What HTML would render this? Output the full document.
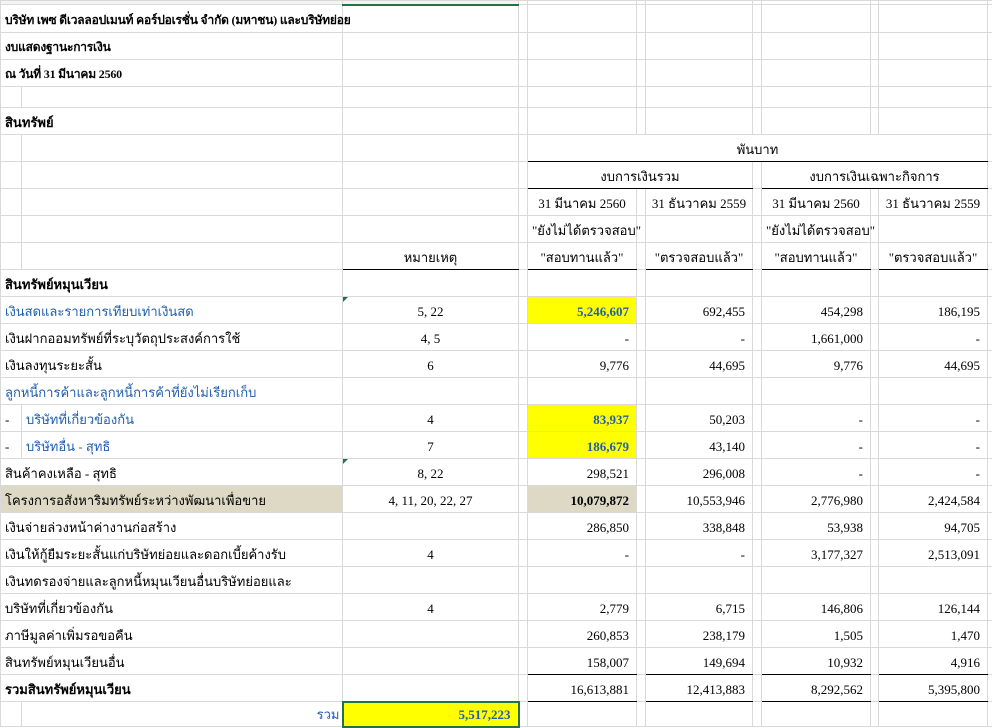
<!DOCTYPE html>
<html><head><meta charset="utf-8">
<style>
html,body{margin:0;padding:0;background:#fff;}
body{width:992px;height:726px;overflow:hidden;position:relative;font-family:"Liberation Serif","Noto Serif CJK SC",serif;font-size:13px;color:#000;}
table{border-collapse:collapse;table-layout:fixed;position:absolute;left:0;top:0;width:992px;}
td{border:1px solid #d9d9d9;padding:0 4px 4px 4px;vertical-align:bottom;white-space:nowrap;overflow:visible;line-height:15px;}
td.l{text-align:left}
td.c{text-align:center}
td.r{text-align:right;padding-right:7px}
.b{font-weight:bold}
.bl{color:#1f5fae}
.y{background:#ffff00}
.t{background:#ddd9c4}
.ub{border-bottom:1.5px solid #000}
.tri{position:relative}
.tri:before{content:"";position:absolute;left:0;top:0;border-top:5px solid #217346;border-right:5px solid transparent;}
.ttl{font-size:12px;letter-spacing:-0.2px}
</style></head><body>
<table>
<colgroup>
<col style="width:21px"><col style="width:321px"><col style="width:176px"><col style="width:9px">
<col style="width:109px"><col style="width:9px"><col style="width:107px"><col style="width:9px">
<col style="width:109px"><col style="width:8px"><col style="width:109px"><col style="width:5px">
</colgroup>
<tr style="height:4px"><td colspan="2" style="padding:0;background:#f3f3f3"></td><td style="padding:0;background:#f3f3f3;border-bottom:2px solid #217346"></td><td style="padding:0"></td><td style="padding:0"></td><td style="padding:0"></td><td style="padding:0"></td><td style="padding:0"></td><td style="padding:0"></td><td style="padding:0"></td><td style="padding:0"></td><td style="padding:0"></td></tr>
<tr style="height:28px"><td colspan="2" class="l b ttl">บริษัท เพซ ดีเวลลอปเมนท์ คอร์ปอเรชั่น จำกัด (มหาชน) และบริษัทย่อย</td><td></td><td></td><td></td><td></td><td></td><td></td><td></td><td></td><td></td><td></td></tr>
<tr style="height:27px"><td colspan="2" class="l b ttl">งบแสดงฐานะการเงิน</td><td></td><td></td><td></td><td></td><td></td><td></td><td></td><td></td><td></td><td></td></tr>
<tr style="height:27px"><td colspan="2" class="l b ttl">ณ วันที่ 31 มีนาคม 2560</td><td></td><td></td><td></td><td></td><td></td><td></td><td></td><td></td><td></td><td></td></tr>
<tr style="height:21px"><td></td><td></td><td></td><td></td><td></td><td></td><td></td><td></td><td></td><td></td><td></td><td></td></tr>
<tr style="height:27px"><td colspan="2" class="l b">สินทรัพย์</td><td></td><td></td><td></td><td></td><td></td><td></td><td></td><td></td><td></td><td></td></tr>
<tr style="height:27px"><td></td><td></td><td></td><td></td><td colspan="7" class="c ub">พันบาท</td><td></td></tr>
<tr style="height:27px"><td></td><td></td><td></td><td></td><td colspan="3" class="c ub">งบการเงินรวม</td><td></td><td colspan="3" class="c ub">งบการเงินเฉพาะกิจการ</td><td></td></tr>
<tr style="height:27px"><td></td><td></td><td></td><td></td><td class="c">31 มีนาคม 2560</td><td></td><td class="c">31 ธันวาคม 2559</td><td></td><td class="c">31 มีนาคม 2560</td><td></td><td class="c">31 ธันวาคม 2559</td><td></td></tr>
<tr style="height:27px"><td></td><td></td><td></td><td></td><td class="c">"ยังไม่ได้ตรวจสอบ"</td><td></td><td></td><td></td><td class="c">"ยังไม่ได้ตรวจสอบ"</td><td></td><td></td><td></td></tr>
<tr style="height:27px"><td></td><td></td><td class="c ub">หมายเหตุ</td><td></td><td class="c ub">"สอบทานแล้ว"</td><td></td><td class="c ub">"ตรวจสอบแล้ว"</td><td></td><td class="c ub">"สอบทานแล้ว"</td><td></td><td class="c ub">"ตรวจสอบแล้ว"</td><td></td></tr>
<tr style="height:27px"><td colspan="2" class="l b">สินทรัพย์หมุนเวียน</td><td></td><td></td><td></td><td></td><td></td><td></td><td></td><td></td><td></td><td></td></tr>
<tr style="height:27px"><td colspan="2" class="l bl">เงินสดและรายการเทียบเท่าเงินสด</td><td class="c tri">5, 22</td><td></td><td class="r y b bl">5,246,607</td><td></td><td class="r">692,455</td><td></td><td class="r">454,298</td><td></td><td class="r">186,195</td><td></td></tr>
<tr style="height:27px"><td colspan="2" class="l">เงินฝากออมทรัพย์ที่ระบุวัตถุประสงค์การใช้</td><td class="c">4, 5</td><td></td><td class="r">-</td><td></td><td class="r">-</td><td></td><td class="r">1,661,000</td><td></td><td class="r">-</td><td></td></tr>
<tr style="height:27px"><td colspan="2" class="l">เงินลงทุนระยะสั้น</td><td class="c">6</td><td></td><td class="r">9,776</td><td></td><td class="r">44,695</td><td></td><td class="r">9,776</td><td></td><td class="r">44,695</td><td></td></tr>
<tr style="height:27px"><td colspan="2" class="l bl">ลูกหนี้การค้าและลูกหนี้การค้าที่ยังไม่เรียกเก็บ</td><td></td><td></td><td></td><td></td><td></td><td></td><td></td><td></td><td></td><td></td></tr>
<tr style="height:27px"><td class="l">-</td><td class="l bl">บริษัทที่เกี่ยวข้องกัน</td><td class="c">4</td><td></td><td class="r y b bl">83,937</td><td></td><td class="r">50,203</td><td></td><td class="r">-</td><td></td><td class="r">-</td><td></td></tr>
<tr style="height:27px"><td class="l">-</td><td class="l bl">บริษัทอื่น - สุทธิ</td><td class="c">7</td><td></td><td class="r y b bl">186,679</td><td></td><td class="r">43,140</td><td></td><td class="r">-</td><td></td><td class="r">-</td><td></td></tr>
<tr style="height:27px"><td colspan="2" class="l">สินค้าคงเหลือ - สุทธิ</td><td class="c tri">8, 22</td><td></td><td class="r">298,521</td><td></td><td class="r">296,008</td><td></td><td class="r">-</td><td></td><td class="r">-</td><td></td></tr>
<tr style="height:27px"><td colspan="2" class="l t">โครงการอสังหาริมทรัพย์ระหว่างพัฒนาเพื่อขาย</td><td class="c">4, 11, 20, 22, 27</td><td></td><td class="r t b">10,079,872</td><td></td><td class="r">10,553,946</td><td></td><td class="r">2,776,980</td><td></td><td class="r">2,424,584</td><td></td></tr>
<tr style="height:27px"><td colspan="2" class="l">เงินจ่ายล่วงหน้าค่างานก่อสร้าง</td><td></td><td></td><td class="r">286,850</td><td></td><td class="r">338,848</td><td></td><td class="r">53,938</td><td></td><td class="r">94,705</td><td></td></tr>
<tr style="height:27px"><td colspan="2" class="l">เงินให้กู้ยืมระยะสั้นแก่บริษัทย่อยและดอกเบี้ยค้างรับ</td><td class="c">4</td><td></td><td class="r">-</td><td></td><td class="r">-</td><td></td><td class="r">3,177,327</td><td></td><td class="r">2,513,091</td><td></td></tr>
<tr style="height:27px"><td colspan="2" class="l">เงินทดรองจ่ายและลูกหนี้หมุนเวียนอื่นบริษัทย่อยและ</td><td></td><td></td><td></td><td></td><td></td><td></td><td></td><td></td><td></td><td></td></tr>
<tr style="height:27px"><td colspan="2" class="l">บริษัทที่เกี่ยวข้องกัน</td><td class="c">4</td><td></td><td class="r">2,779</td><td></td><td class="r">6,715</td><td></td><td class="r">146,806</td><td></td><td class="r">126,144</td><td></td></tr>
<tr style="height:27px"><td colspan="2" class="l">ภาษีมูลค่าเพิ่มรอขอคืน</td><td></td><td></td><td class="r">260,853</td><td></td><td class="r">238,179</td><td></td><td class="r">1,505</td><td></td><td class="r">1,470</td><td></td></tr>
<tr style="height:27px"><td colspan="2" class="l">สินทรัพย์หมุนเวียนอื่น</td><td></td><td></td><td class="r ub">158,007</td><td></td><td class="r ub">149,694</td><td></td><td class="r ub">10,932</td><td></td><td class="r ub">4,916</td><td></td></tr>
<tr style="height:27px"><td colspan="2" class="l b">รวมสินทรัพย์หมุนเวียน</td><td></td><td></td><td class="r ub">16,613,881</td><td></td><td class="r ub">12,413,883</td><td></td><td class="r ub">8,292,562</td><td></td><td class="r ub">5,395,800</td><td></td></tr>
<tr style="height:25px"><td></td><td class="r bl" style="padding-right:2px">รวม</td><td class="r y b bl" style="border:2px solid #217346">5,517,223</td><td></td><td></td><td></td><td></td><td></td><td></td><td></td><td></td><td></td></tr>
</table>
</body></html>
